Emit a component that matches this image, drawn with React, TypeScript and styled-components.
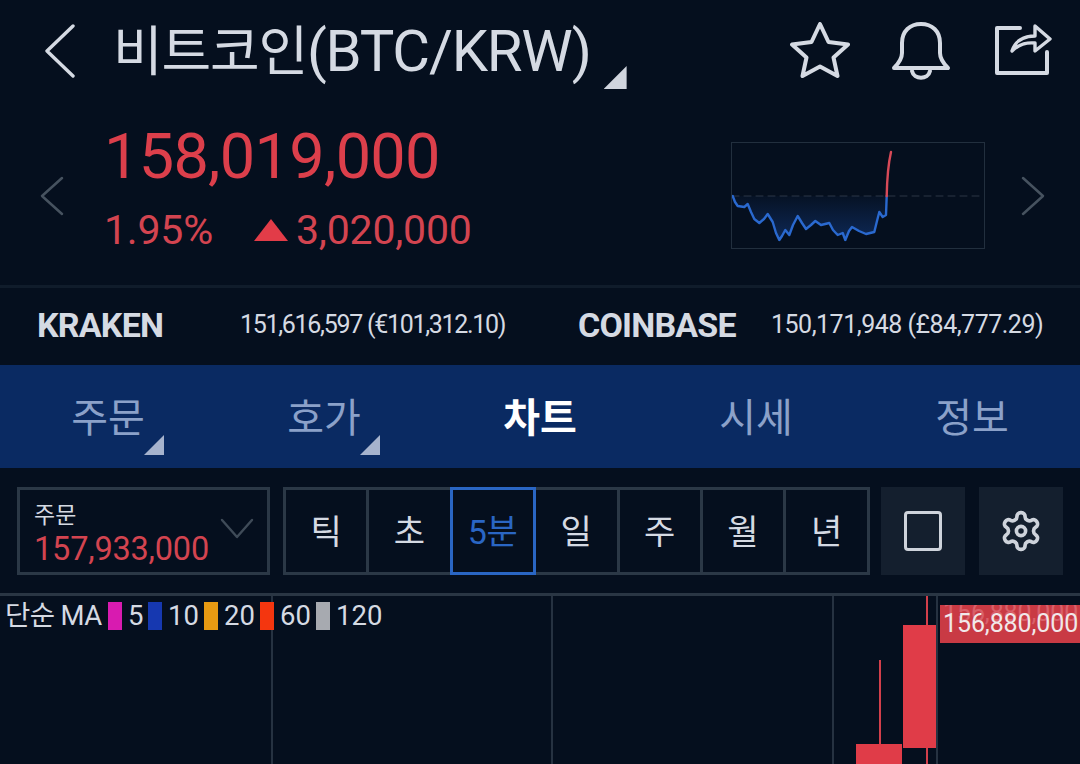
import styled, { createGlobalStyle } from "styled-components";

const GlobalStyle = createGlobalStyle`
  html, body {
    margin: 0;
    padding: 0;
    background: #050f1e;
  }
  * {
    box-sizing: border-box;
  }
`;

const Page = styled.div`
  width: 1080px;
  height: 764px;
  overflow: hidden;
  background: #050f1e;
  font-family: Roboto, "Noto Sans CJK KR", sans-serif;
  color: #d5dae3;
`;

const Header = styled.header`
  height: 100px;
  display: flex;
  align-items: flex-start;
  padding: 22px 27px 0 44px;
`;

const BackButton = styled.div`
  width: 69px;
  padding-top: 2px;
  flex: none;
`;

const Title = styled.h1`
  margin: 0;
  padding-top: 1px;
  font-size: 54px;
  line-height: 56px;
  font-weight: 400;
  letter-spacing: -1.2px;
  white-space: nowrap;
`;

const TitleLatin = styled.span`
  font-size: 58px;
  letter-spacing: -1.2px;
`;

const Corner = styled.span<{ $size: number; $color: string }>`
  display: block;
  flex: none;
  width: ${(props) => props.$size}px;
  height: ${(props) => props.$size}px;
  background: ${(props) => props.$color};
  clip-path: polygon(100% 0, 100% 100%, 0 100%);
`;

const TitleCorner = styled(Corner)`
  margin: 44px 0 0 13px;
`;

const HeaderIcons = styled.div`
  margin-left: auto;
  display: flex;
  gap: 42px;
`;

const Summary = styled.section`
  height: 188px;
  border-bottom: 3px solid #101c2b;
  display: flex;
  align-items: flex-start;
  padding: 0 35px 0 40px;
`;

const SideArrow = styled.div`
  flex: none;
  margin-top: 75px;
`;

const PriceBlock = styled.div`
  margin-left: 40px;
  width: 627px;
  flex: none;
`;

const MainPrice = styled.div`
  font-size: 63px;
  line-height: 70px;
  margin-top: 22px;
  font-weight: 400;
  letter-spacing: -0.7px;
  color: #dc3f4b;
`;

const ChangeRow = styled.div`
  display: flex;
  align-items: center;
  margin-top: 14px;
  font-size: 41px;
  line-height: 48px;
  font-weight: 400;
  letter-spacing: -0.2px;
  color: #d34450;
`;

const Percent = styled.span`
  width: 150px;
`;

const UpMark = styled.span`
  width: 34px;
  height: 22px;
  margin-right: 8px;
  background: #e23c48;
  clip-path: polygon(50% 0, 100% 100%, 0 100%);
`;

const Spark = styled.div`
  width: 254px;
  height: 107px;
  margin-top: 42px;
  border: 1px solid #222f3e;
  flex: none;
`;

const ForwardArrow = styled(SideArrow)`
  margin-left: 36px;
`;

const Exchanges = styled.section`
  height: 77px;
  display: flex;
  align-items: center;
  padding: 0 38px 4px 37px;
`;

const ExchangeName = styled.b<{ $width: number }>`
  width: ${(props) => props.$width}px;
  font-size: 34px;
  font-weight: 700;
  letter-spacing: -0.8px;
  flex: none;
`;

const ExchangeValue = styled.span<{ $width: number; $spacing: number }>`
  width: ${(props) => props.$width}px;
  flex: none;
  font-size: 25px;
  letter-spacing: ${(props) => props.$spacing}px;
  font-weight: 400;
  white-space: nowrap;
`;

const Tabs = styled.nav`
  height: 103px;
  display: grid;
  grid-template-columns: repeat(5, 1fr);
  background: #0a2a62;
`;

const Tab = styled.div<{ $active?: boolean }>`
  position: relative;
  display: flex;
  align-items: center;
  justify-content: center;
  padding-bottom: 3px;
  font-size: 40px;
  font-weight: ${(props) => (props.$active ? 700 : 400)};
  color: ${(props) => (props.$active ? "#ffffff" : "#8ba1c9")};
`;

const TabCorner = styled(Corner)`
  position: absolute;
  left: 144px;
  top: 70px;
`;

const Toolbar = styled.section`
  height: 128px;
  display: flex;
  align-items: flex-start;
  padding: 19px 17px 0 17px;
  border-bottom: 3px solid #2a3644;
`;

const PriceSelect = styled.div`
  width: 253px;
  height: 88px;
  border: 3px solid #2b3846;
  padding: 10px 13px 0 14px;
  display: flex;
  align-items: center;
  flex: none;
`;

const SelectText = styled.div`
  flex: 1;
  margin-top: -3px;
`;

const SelectLabel = styled.div`
  font-size: 23px;
  line-height: 29px;
  font-weight: 400;
`;

const SelectValue = styled.div`
  font-size: 32.5px;
  line-height: 38px;
  letter-spacing: -0.2px;
  font-weight: 400;
  color: #d34450;
`;

const SelectChevron = styled.div`
  flex: none;
  margin-top: -14px;
`;

const Segments = styled.div`
  margin-left: 13px;
  height: 88px;
  width: 587px;
  flex: none;
  display: grid;
  grid-template-columns: 83px 83.5px 83px 84px 83px 83.5px 1fr;
  border: 3px solid #2b3846;
`;

const Segment = styled.div<{ $active?: boolean }>`
  position: relative;
  display: flex;
  align-items: center;
  justify-content: center;
  font-size: 34px;
  letter-spacing: -0.5px;
  padding-bottom: 4px;
  color: ${(props) => (props.$active ? "#2a66c4" : "#d5dae3")};
  border-right: 3px solid #2b3846;
  &:last-child {
    border-right: 0;
  }
  ${(props) =>
    props.$active &&
    `
    &::after {
      content: "";
      position: absolute;
      inset: -3px -3px -3px -3px;
      border: 3px solid #2a66c4;
    }
  `}
`;

const SquareButton = styled.div`
  width: 84px;
  height: 88px;
  margin-left: 11px;
  flex: none;
  background: #141f2e;
  display: flex;
  align-items: center;
  justify-content: center;
  & + & {
    margin-left: 14px;
  }
`;

const EmptyBox = styled.div`
  width: 38px;
  height: 40px;
  border: 3px solid #ced3db;
  border-radius: 4px;
`;

const Chart = styled.section`
  position: relative;
  height: 168px;
`;

const GridLine = styled.i<{ $x: number }>`
  position: absolute;
  left: ${(props) => props.$x}px;
  top: 0;
  bottom: 0;
  width: 2px;
  background: #263241;
`;

const Legend = styled.div`
  position: absolute;
  left: 5px;
  top: 2px;
  display: flex;
  align-items: center;
  font-size: 27.5px;
  line-height: 36px;
  font-weight: 400;
  letter-spacing: 0;
  color: #d5dae3;
`;

const LegendName = styled.span`
  width: 103px;
  white-space: nowrap;
  letter-spacing: -0.6px;
`;

const LegendItem = styled.span`
  display: flex;
  align-items: center;
`;

const Swatch = styled.span<{ $color: string }>`
  width: 14px;
  height: 28px;
  margin-right: 6px;
  background: ${(props) => props.$color};
`;

const LegendValue = styled.span<{ $width: number }>`
  width: ${(props) => props.$width}px;
`;

const Candles = styled.svg`
  position: absolute;
  left: 840px;
  top: 0;
`;

const LastPrice = styled.div`
  position: absolute;
  z-index: 0;
  left: 940px;
  top: 9px;
  width: 140px;
  height: 38px;
  background: #c93a44;
  color: #f1e8ea;
  font-size: 25px;
  line-height: 38px;
  padding-left: 3px;
  letter-spacing: -0.1px;
  white-space: nowrap;
  overflow: hidden;
`;

const GhostPrice = styled.span`
  position: absolute;
  z-index: -1;
  left: 3px;
  top: -11px;
  color: #d9606a;
`;

const LineIcon = styled.svg`
  display: block;
  fill: none;
  stroke-linecap: round;
  stroke-linejoin: round;
`;

const tabs = ["주문", "호가", "차트", "시세", "정보"];
const segments = ["틱", "초", "5분", "일", "주", "월", "년"];
const legend = [
  { color: "#d81bb0", label: "5", width: 20 },
  { color: "#1638b0", label: "10", width: 36 },
  { color: "#e89a12", label: "20", width: 36 },
  { color: "#f4360f", label: "60", width: 36 },
  { color: "#a7aab0", label: "120", width: 50 },
];

const blueLine =
  "M0.7 53L3 59L5.7 63L12.3 64L15.7 61L19 69L22.3 76L27.3 80L32 76L35.7 71L40.7 79L44 90L47.3 97L50 93L53.3 87L57.3 92L61 82L65.7 73L70 80L74 86L79 82L83.3 78L89 82L97.3 80L101 87L105.7 92L110.7 90L113.3 97L117 88L120 84L127 88L134 91L142.3 89L145 78L147.3 69L150.7 74L154 72L154.7 53";

function App() {
  return (
    <Page>
      <GlobalStyle />
      <Header>
        <BackButton>
          <LineIcon width="32" height="54" viewBox="0 0 32 54" stroke="#d5dae3" strokeWidth="3.4">
            <path d="M29 2L3 27L29 52" />
          </LineIcon>
        </BackButton>
        <Title>
          비트코인<TitleLatin>(BTC/KRW)</TitleLatin>
        </Title>
        <TitleCorner $size={23} $color="#d0d5de" />
        <HeaderIcons>
          <LineIcon width="60" height="56" viewBox="0 0 60 56" stroke="#d5dae3" strokeWidth="4">
            <path d="M30 2L38.500 20L58 22.500L43.500 35.500L47.500 54L30 44.500L12.500 54L16.500 35.500L2 22.500L21.500 20Z" />
          </LineIcon>
          <LineIcon width="61" height="58" viewBox="0 0 61 58" stroke="#d5dae3" strokeWidth="4">
            <path d="M2 46C6 42 10 37 10 31V21C10 9 18 2 29 2C40 2 48 9 48 21V31C48 37 52 42 56 46Z" />
            <path d="M20 49C22 58 36 58 38 49" />
          </LineIcon>
          <LineIcon width="58" height="54" viewBox="0 0 58 54" stroke="#d5dae3" strokeWidth="4">
            <path d="M25 6H2V51H52V30" />
            <path d="M17 29C20 19 29 14 40 14V4L55 17L40 29V21C30 20 23 23 17 29Z" strokeWidth="3.400" />
          </LineIcon>
        </HeaderIcons>
      </Header>

      <Summary>
        <SideArrow>
          <LineIcon width="24" height="42" viewBox="0 0 24 42" stroke="#46525f" strokeWidth="2.500">
            <path d="M22 3L2 21L22 39" />
          </LineIcon>
        </SideArrow>
        <PriceBlock>
          <MainPrice>158,019,000</MainPrice>
          <ChangeRow>
            <Percent>1.95%</Percent>
            <UpMark />
            3,020,000
          </ChangeRow>
        </PriceBlock>
        <Spark>
          <LineIcon width="252" height="105" viewBox="0 0 252 105">
            <defs>
              <linearGradient id="sparkFill" x1="0" y1="0" x2="0" y2="1">
                <stop offset="0" stopColor="#1b4fa8" stopOpacity="0.05" />
                <stop offset="1" stopColor="#1b4fa8" stopOpacity="0.4" />
              </linearGradient>
            </defs>
            <path d="M0 53H252" stroke="#2c3744" strokeWidth="1" strokeDasharray="7 5" />
            <path d={`${blueLine}Z`} fill="url(#sparkFill)" />
            <path d={blueLine} stroke="#2a69cf" strokeWidth="2.400" />
            <path d="M154.700 53C155 38 156 22 159 9" stroke="#d84a58" strokeWidth="2.400" />
          </LineIcon>
        </Spark>
        <ForwardArrow>
          <LineIcon width="24" height="42" viewBox="0 0 24 42" stroke="#46525f" strokeWidth="2.500">
            <path d="M2 3L22 21L2 39" />
          </LineIcon>
        </ForwardArrow>
      </Summary>

      <Exchanges>
        <ExchangeName $width={203}>KRAKEN</ExchangeName>
        <ExchangeValue $width={338} $spacing={-1.3}>151,616,597 (€101,312.10)</ExchangeValue>
        <ExchangeName $width={193}>COINBASE</ExchangeName>
        <ExchangeValue $width={271} $spacing={-0.5}>150,171,948 (£84,777.29)</ExchangeValue>
      </Exchanges>

      <Tabs>
        {tabs.map((tab, index) => (
          <Tab key={tab} $active={index === 2}>
            {tab}
            {index < 2 && <TabCorner $size={20} $color="#a6b3cd" />}
          </Tab>
        ))}
      </Tabs>

      <Toolbar>
        <PriceSelect>
          <SelectText>
            <SelectLabel>주문</SelectLabel>
            <SelectValue>157,933,000</SelectValue>
          </SelectText>
          <SelectChevron>
            <LineIcon width="34" height="22" viewBox="0 0 34 22" stroke="#3f4b58" strokeWidth="2.400">
              <path d="M2 2L17 19L32 2" />
            </LineIcon>
          </SelectChevron>
        </PriceSelect>
        <Segments>
          {segments.map((segment) => (
            <Segment key={segment} $active={segment === "5분"}>
              {segment}
            </Segment>
          ))}
        </Segments>
        <SquareButton>
          <EmptyBox />
        </SquareButton>
        <SquareButton>
          <LineIcon width="44" height="44" viewBox="0 0 24 24" stroke="#ced3db" strokeWidth="2">
            <path d="M12.220 2h-.44a2 2 0 0 0-2 2v.18a2 2 0 0 1-1 1.730l-.43.250a2 2 0 0 1-2 0l-.150-.080a2 2 0 0 0-2.730.730l-.220.380a2 2 0 0 0 .730 2.730l.150.100a2 2 0 0 1 1 1.720v.510a2 2 0 0 1-1 1.740l-.150.090a2 2 0 0 0-.730 2.730l.220.380a2 2 0 0 0 2.730.730l.150-.080a2 2 0 0 1 2 0l.430.250a2 2 0 0 1 1 1.730V20a2 2 0 0 0 2 2h.440a2 2 0 0 0 2-2v-.180a2 2 0 0 1 1-1.730l.430-.250a2 2 0 0 1 2 0l.150.080a2 2 0 0 0 2.730-.730l.220-.390a2 2 0 0 0-.730-2.730l-.150-.080a2 2 0 0 1-1-1.740v-.500a2 2 0 0 1 1-1.740l.150-.090a2 2 0 0 0 .730-2.730l-.220-.380a2 2 0 0 0-2.730-.730l-.150.080a2 2 0 0 1-2 0l-.430-.250a2 2 0 0 1-1-1.730V4a2 2 0 0 0-2-2z" />
            <circle cx="12" cy="12" r="2.500" />
          </LineIcon>
        </SquareButton>
      </Toolbar>

      <Chart>
        <GridLine $x={271} />
        <GridLine $x={551} />
        <GridLine $x={832} />
        <GridLine $x={936} />
        <Candles width="100" height="168" viewBox="0 0 100 168">
          <rect x="39" y="64" width="2" height="90" fill="#d23f4b" />
          <rect x="16" y="148" width="46" height="20" fill="#e03c48" />
          <rect x="86" y="0" width="2" height="168" fill="#d23f4b" />
          <rect x="63" y="29" width="33" height="123" fill="#e03c48" />
        </Candles>
        <Legend>
          <LegendName>단순 MA</LegendName>
          {legend.map((item) => (
            <LegendItem key={item.label}>
              <Swatch $color={item.color} />
              <LegendValue $width={item.width}>{item.label}</LegendValue>
            </LegendItem>
          ))}
        </Legend>
        <LastPrice>
          <GhostPrice>156,880,000</GhostPrice>
          156,880,000
        </LastPrice>
      </Chart>
    </Page>
  );
}

export default App;
